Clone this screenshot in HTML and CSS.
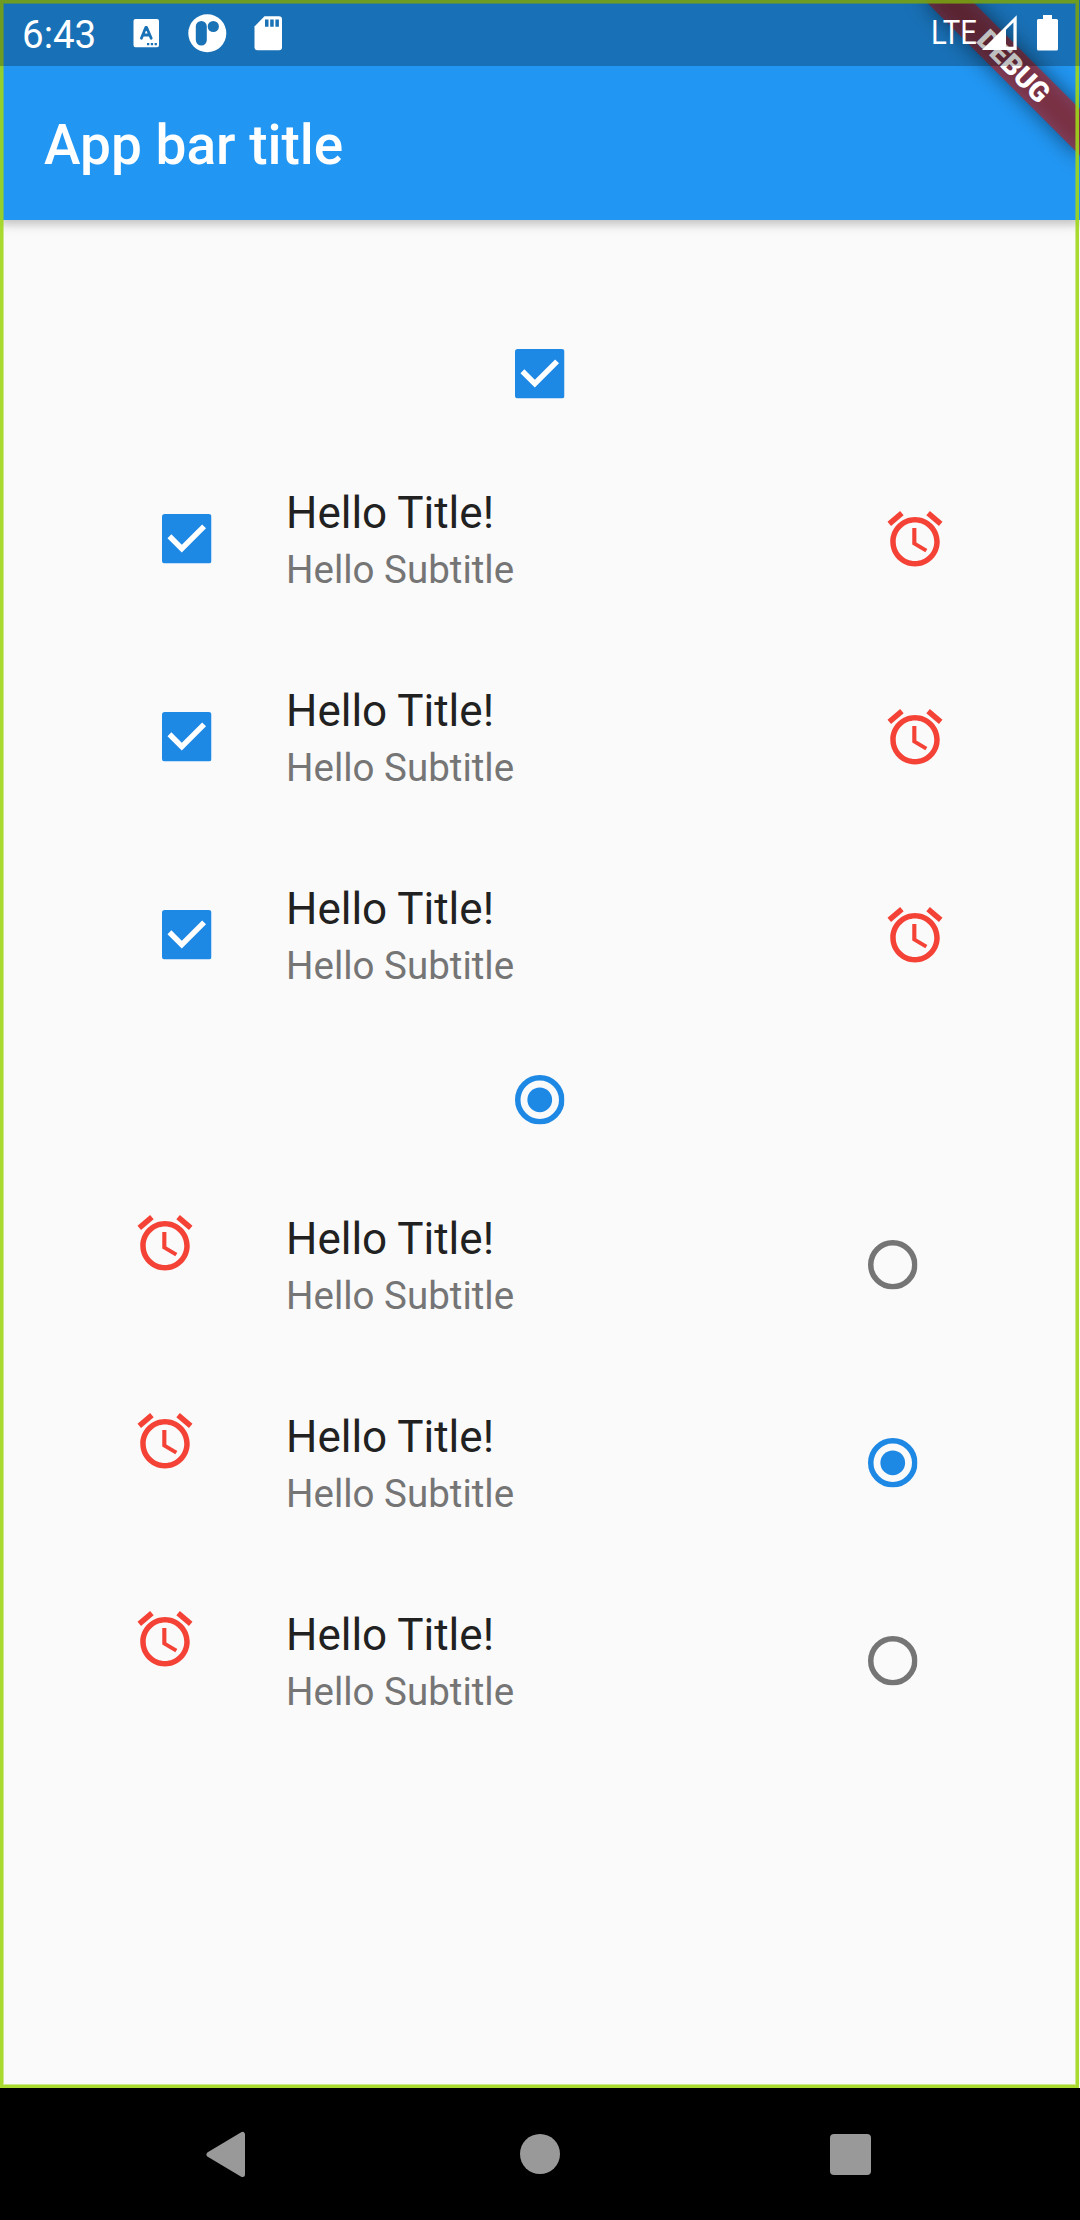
FILE: index.html
```html
<!DOCTYPE html>
<html lang="en">
<head>
<meta charset="utf-8">
<title>App bar title</title>
<link rel="stylesheet" href="styles.css">
</head>
<body>
<svg class="defs" aria-hidden="true">
  <symbol id="alarm" viewBox="0 0 24 24"><path d="M22 5.72l-4.6-3.86-1.29 1.53 4.6 3.86L22 5.72zM7.88 3.39L6.6 1.86 2 5.71l1.29 1.53 4.59-3.85zM12.5 8H11v6l4.75 2.85.75-1.23-4-2.37V8zM12 4c-4.97 0-9 4.03-9 9s4.02 9 9 9c4.97 0 9-4.03 9-9s-4.03-9-9-9zm0 16c-3.87 0-7-3.13-7-7s3.13-7 7-7 7 3.13 7 7-3.13 7-7 7z"/></symbol>
  <symbol id="check" viewBox="0 0 18 18"><rect width="18" height="18" rx="1"/><path d="M2.7 8.1 7.2 12.6 15.3 4.5" fill="none" stroke="#fff" stroke-width="2"/></symbol>
  <symbol id="radio-on" viewBox="0 0 18 18"><circle cx="9" cy="9" r="8" fill="none" stroke="currentColor" stroke-width="2"/><circle cx="9" cy="9" r="4.5"/></symbol>
  <symbol id="radio-off" viewBox="0 0 18 18"><circle cx="9" cy="9" r="8" fill="none" stroke="currentColor" stroke-width="2"/></symbol>
</svg>
<div class="screen">
  <div class="app">
    <header class="appbar"><h1 class="appbar-title">App bar title</h1></header>
    <main class="content">
      <div class="single"><svg class="control"><use href="#check"/></svg></div>
      <div class="tile">
        <div class="slot"><svg class="control"><use href="#check"/></svg></div>
        <div class="texts"><div class="title">Hello Title!</div><div class="subtitle">Hello Subtitle</div></div>
        <svg class="alarm"><use href="#alarm"/></svg>
      </div>
      <div class="tile">
        <div class="slot"><svg class="control"><use href="#check"/></svg></div>
        <div class="texts"><div class="title">Hello Title!</div><div class="subtitle">Hello Subtitle</div></div>
        <svg class="alarm"><use href="#alarm"/></svg>
      </div>
      <div class="tile">
        <div class="slot"><svg class="control"><use href="#check"/></svg></div>
        <div class="texts"><div class="title">Hello Title!</div><div class="subtitle">Hello Subtitle</div></div>
        <svg class="alarm"><use href="#alarm"/></svg>
      </div>
      <div class="single"><svg class="control"><use href="#radio-on"/></svg></div>
      <div class="tile">
        <div class="slot slot-top"><svg class="alarm"><use href="#alarm"/></svg></div>
        <div class="texts"><div class="title">Hello Title!</div><div class="subtitle">Hello Subtitle</div></div>
        <div class="slot"><svg class="control off"><use href="#radio-off"/></svg></div>
      </div>
      <div class="tile">
        <div class="slot slot-top"><svg class="alarm"><use href="#alarm"/></svg></div>
        <div class="texts"><div class="title">Hello Title!</div><div class="subtitle">Hello Subtitle</div></div>
        <div class="slot"><svg class="control"><use href="#radio-on"/></svg></div>
      </div>
      <div class="tile">
        <div class="slot slot-top"><svg class="alarm"><use href="#alarm"/></svg></div>
        <div class="texts"><div class="title">Hello Title!</div><div class="subtitle">Hello Subtitle</div></div>
        <div class="slot"><svg class="control off"><use href="#radio-off"/></svg></div>
      </div>
    </main>
    <svg class="banner" viewBox="0 0 220 220">
      <defs><filter id="soft" x="-30%" y="-150%" width="160%" height="400%"><feGaussianBlur stdDeviation="10.5"/></filter></defs>
      <g transform="translate(220 0) rotate(45)">
        <rect x="-110" y="77" width="220" height="33" fill="#000" fill-opacity=".5" filter="url(#soft)"/>
        <rect x="-110" y="77" width="220" height="33" fill="#b71c1c" fill-opacity=".627"/>
        <text class="banner-text" x="0" y="103.5" text-anchor="middle">DEBUG</text>
      </g>
    </svg>
    <div class="frame"></div>
  </div>
  <div class="statusbar">
    <span class="clock">6:43</span>
    <svg class="notices" viewBox="0 0 152 66">
      <path fill="#fff" d="M3.500 19h21.500a2 2 0 0 1 2 2v24.300a2 2 0 0 1-2 2H3.500a2 2 0 0 1-2-2V21a2 2 0 0 1 2-2z"/>
      <path d="M9.400 38.200 13.800 27.500h.8L19.200 38.200M11.200 35h6.400" fill="none" stroke="#1971b6" stroke-width="2.800" stroke-linecap="round" stroke-linejoin="round"/>
      <path d="M15 43h2.300v2.300H15zM18.800 43h2.300v2.300h-2.300zM22.600 43h2.300v2.300h-2.300z" fill="#1971b6"/>
      <circle cx="75.300" cy="33.300" r="19" fill="#fff"/>
      <rect x="63.800" y="21" width="11" height="24.500" rx="5.500" fill="#1971b6"/>
      <circle cx="81.300" cy="26.500" r="5.600" fill="#1971b6"/>
      <path fill="#fff" d="M132.500 16.300h14.500a3 3 0 0 1 3 3v28a3 3 0 0 1-3 3h-21.500a3 3 0 0 1-3-3V26.500z"/>
      <path fill="#1971b6" d="M133 19.500h3.500v7.300H133zM138.200 19.500h3.500v7.300h-3.500zM143.400 19.500h3.500v7.300h-3.500z"/>
    </svg>
    <svg class="signals" viewBox="0 0 140 66">
      <text class="lte" x="1" y="44.300" textLength="46" lengthAdjust="spacingAndGlyphs">LTE</text>
      <path fill="#fff" fill-rule="evenodd" d="M52 50 86.700 15.300V50zM76 29.800V46.700h7.400V22.400z"/>
      <path fill="#fff" d="M113 15h9v4h4.500a1.500 1.500 0 0 1 1.500 1.500V49a1.500 1.500 0 0 1-1.500 1.500h-18a1.500 1.500 0 0 1-1.500-1.500V20.500a1.500 1.500 0 0 1 1.500-1.500h4.500z"/>
    </svg>
  </div>
  <nav class="navbar">
    <svg class="nav-icon" viewBox="0 0 50 50"><path d="M5 25.500 38.500 5.500V45.500z" fill="#999" stroke="#999" stroke-width="5" stroke-linejoin="round"/></svg>
    <svg class="nav-icon" viewBox="0 0 50 50"><circle cx="25" cy="25" r="20" fill="#999"/></svg>
    <svg class="nav-icon" viewBox="0 0 50 50"><rect x="4" y="5" width="41" height="41" rx="4" fill="#999"/></svg>
  </nav>
</div>
</body>
</html>
```
FILE: styles.css
```css
body {
  margin: 0;
  background: #000;
  font-family: Roboto, "Liberation Sans", sans-serif;
}

.defs {
  position: absolute;
  width: 0;
  height: 0;
}

.screen {
  position: relative;
  width: 1080px;
  height: 2220px;
  display: flex;
  flex-direction: column;
  overflow: hidden;
}

.app {
  position: relative;
  height: 2088px;
  display: flex;
  flex-direction: column;
  background: #fafafa;
  overflow: hidden;
}

.appbar {
  box-sizing: border-box;
  height: 220px;
  padding: 70px 44px 0;
  display: flex;
  align-items: center;
  background: #2196f3;
  box-shadow: 0 4px 8px rgba(0, 0, 0, .16), 0 6px 12px rgba(0, 0, 0, .08);
}

.appbar-title {
  margin: 0;
  font-size: 55px;
  line-height: 64px;
  font-weight: 500;
  color: #fff;
}

.content {
  flex: 1;
  padding: 88px;
  display: flex;
  flex-direction: column;
}

.single {
  height: 132px;
  display: flex;
  align-items: center;
  justify-content: center;
}

.tile {
  box-sizing: border-box;
  height: 198px;
  padding: 0 44px;
  display: flex;
  align-items: center;
  gap: 44px;
}

.slot {
  width: 110px;
  display: flex;
  justify-content: center;
}

.slot-top {
  align-self: flex-start;
  justify-content: flex-start;
  padding-top: 44px;
}

.control {
  width: 49.5px;
  height: 49.5px;
  color: #1e88e5;
  fill: currentColor;
}

.control.off {
  color: #757575;
}

.alarm {
  width: 66px;
  height: 66px;
  fill: #f44336;
}

.texts {
  flex: 1;
  align-self: flex-start;
  padding-top: 45px;
  display: flex;
  flex-direction: column;
  gap: 6px;
}

.title {
  font-size: 44px;
  line-height: 56px;
  color: #212121;
}

.subtitle {
  font-size: 38.5px;
  line-height: 46px;
  color: #757575;
}

.banner {
  position: absolute;
  top: 0;
  right: 0;
  width: 220px;
  height: 220px;
}

.banner-text {
  font-size: 28px;
  font-weight: 900;
  fill: #fff;
}

.frame {
  position: absolute;
  inset: 0 1px 0 0;
  border: 3px solid rgba(160, 214, 24, .9);
  box-shadow: inset 0 0 0 1px rgba(160, 214, 24, .5);
}

.statusbar {
  position: absolute;
  top: 0;
  left: 0;
  box-sizing: border-box;
  width: 100%;
  height: 66px;
  padding: 0 10px 0 22px;
  display: flex;
  align-items: center;
  background: rgba(0, 0, 0, .25);
}

.clock {
  width: 110px;
  padding-top: 4px;
  font-size: 38.5px;
  line-height: 70px;
  color: #fff;
}

.notices {
  width: 152px;
  height: 66px;
}

.signals {
  width: 140px;
  height: 66px;
  margin-left: auto;
}

.lte {
  font-size: 34px;
  fill: #fff;
}

.navbar {
  height: 132px;
  padding: 0 204px;
  display: flex;
  align-items: center;
  justify-content: space-between;
  background: #000;
}

.nav-icon {
  width: 50px;
  height: 50px;
}
```
